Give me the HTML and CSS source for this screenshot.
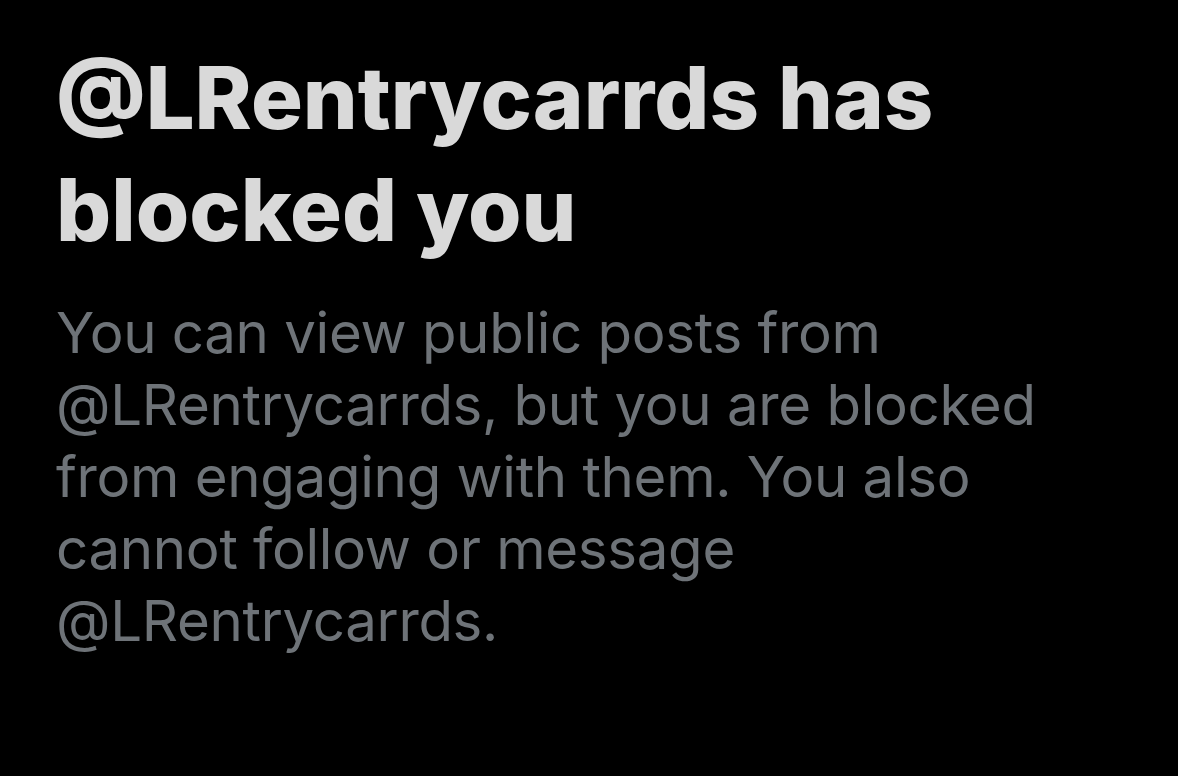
FILE: index.html
```html
<!DOCTYPE html>
<html lang="en">
<head>
<meta charset="UTF-8">
<title>Blocked</title>
<meta name="viewport" content="width=device-width, initial-scale=1.0">
<link rel="stylesheet" href="styles.css">
</head>
<body>
<div class="blocked">
  <h1 class="blocked-title">@LRentrycarrds has blocked you</h1>
  <p class="blocked-text">You can view public posts from @LRentrycarrds, but you are blocked from engaging with them. You also cannot follow or message @LRentrycarrds.</p>
</div>
</body>
</html>
```

FILE: styles.css
```css
html, body {
  margin: 0;
  background: #000;
}
body {
  font-family: Inter, "Noto Sans", Arial, sans-serif;
  height: 776px;
  overflow: hidden;
}
.blocked {
  padding: 42px 0 0 56px;
  width: 1010px;
}
.blocked-title {
  margin: 0;
  font-size: 86.5px;
  font-weight: 800;
  line-height: 112px;
  letter-spacing: 0;
  color: #d9d9d9;
}
.blocked-text {
  margin: 31px 0 0;
  font-size: 56.4px;
  font-weight: 400;
  line-height: 72px;
  letter-spacing: -0.3px;
  color: #6e7378;
}
```
